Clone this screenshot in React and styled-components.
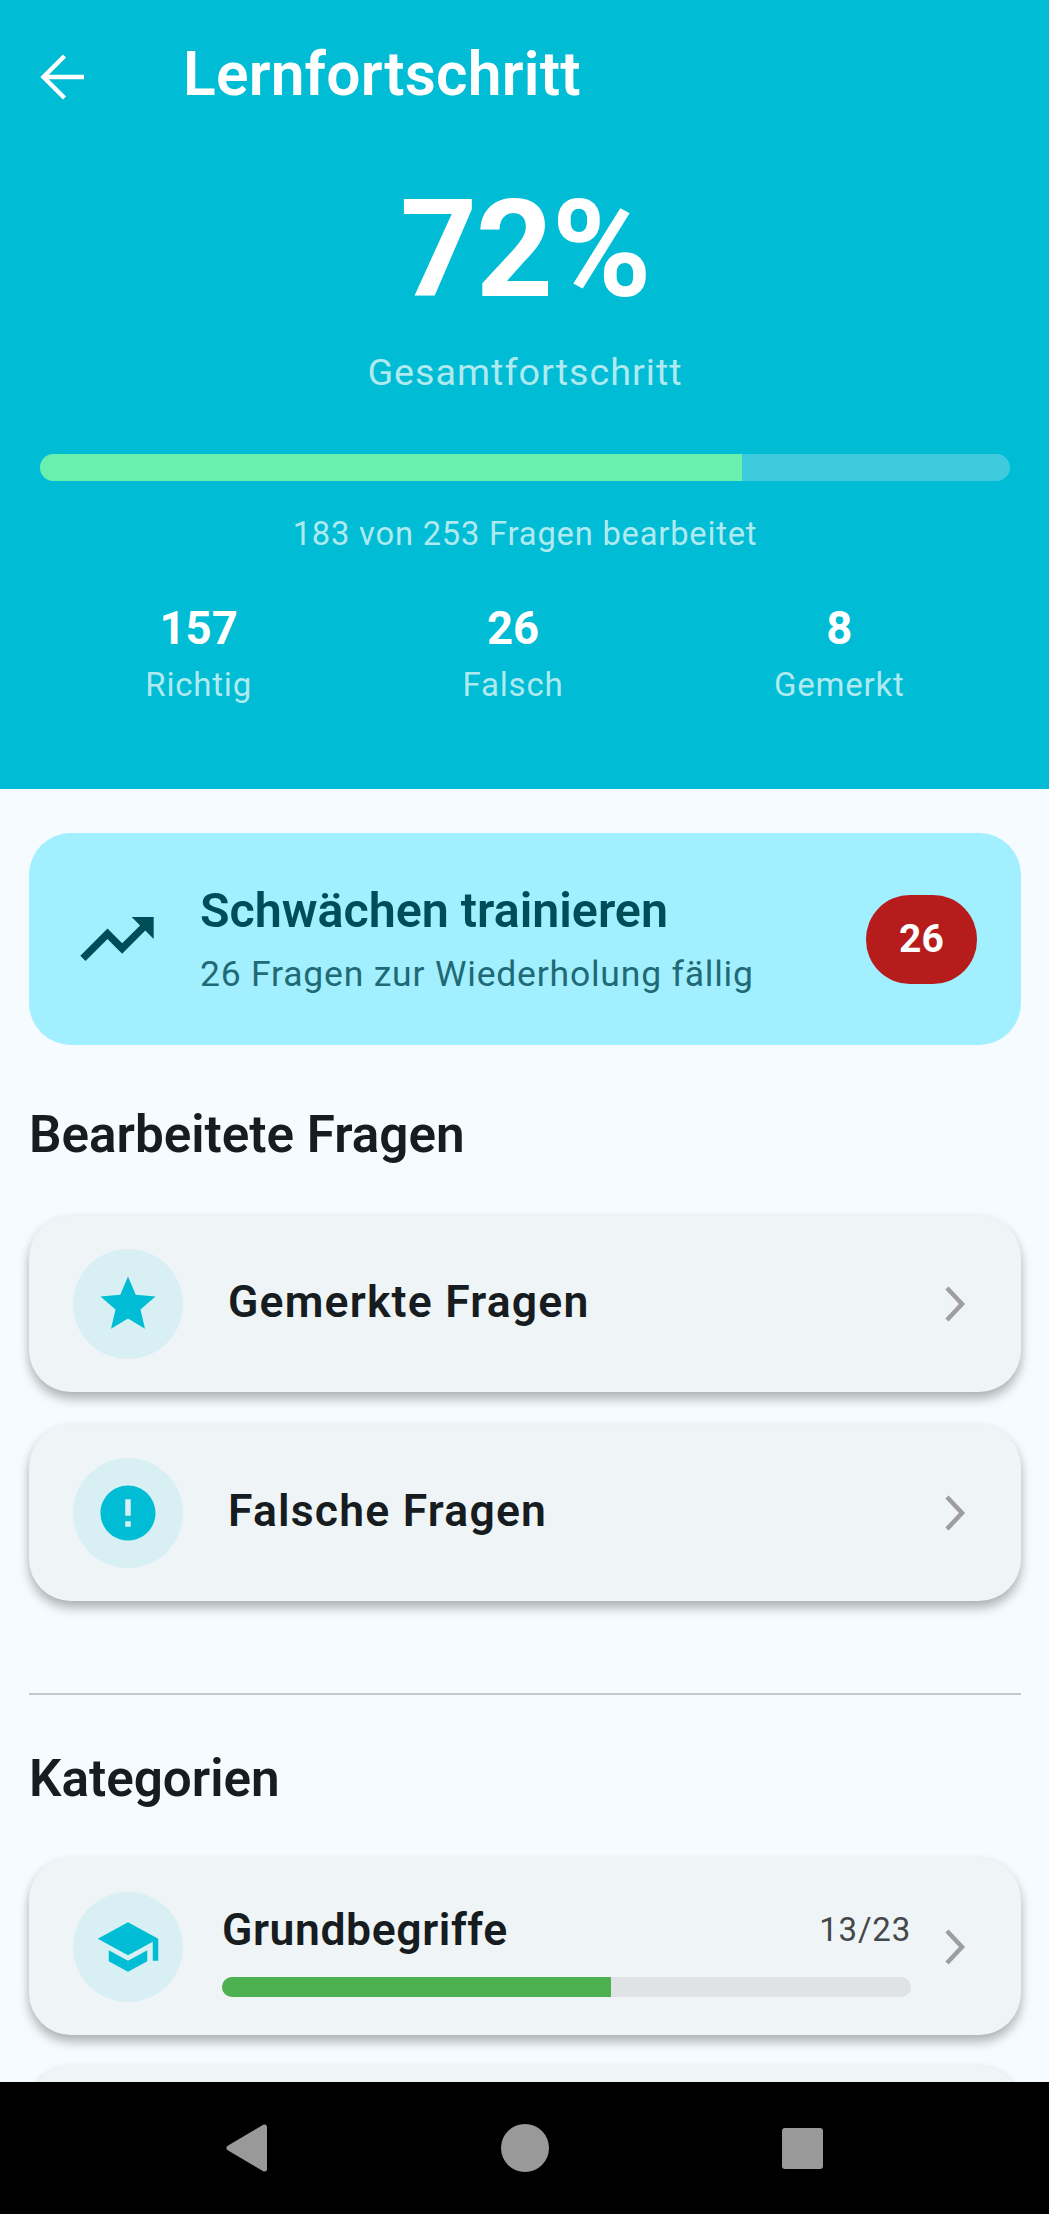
import React from "react";
import styled, { createGlobalStyle } from "styled-components";

const GlobalStyle = createGlobalStyle`
  html, body { margin: 0; padding: 0; }
  body { font-family: "Roboto", "Noto Sans", sans-serif; background: #f5fbfe; }
`;

const Screen = styled.div`
  width: 1049px;
  height: 2214px;
  display: flex;
  flex-direction: column;
  overflow: hidden;
  background: #f5fbfe;
`;

const Scroll = styled.main`
  flex: 1;
  min-height: 0;
  overflow: hidden;
`;

const Header = styled.header`
  height: 789px;
  box-sizing: border-box;
  padding: 0 39px 0 40px;
  background: #00bcd4;
  color: #fff;
  display: flex;
  flex-direction: column;
`;

const TopBar = styled.div`
  height: 150px;
  display: flex;
  align-items: center;
  gap: 98px;
`;

const BackIcon = styled.svg`
  width: 64px;
  height: 64px;
  margin-left: -11px;
  margin-right: -8px;
  flex: none;
  position: relative;
  top: 2px;
  fill: none;
  stroke: #fff;
  stroke-width: 4.5;
`;

const Title = styled.h1`
  margin: 0;
  font-size: 60.5px;
  line-height: 68px;
  font-weight: 600;
  letter-spacing: 0.2px;
`;

const Percent = styled.div`
  margin-top: 20px;
  text-align: center;
  font-size: 135px;
  line-height: 160px;
  font-weight: 700;
  letter-spacing: -1.5px;
`;

const Overall = styled.div`
  margin-top: 17px;
  text-align: center;
  font-size: 37.7px;
  line-height: 50px;
  letter-spacing: 1px;
  color: rgba(255, 255, 255, 0.7);
`;

const Track = styled.div`
  overflow: hidden;
  height: ${(p) => p.$height}px;
  border-radius: ${(p) => p.$height / 2}px;
  background: ${(p) => p.$track};
`;

const Fill = styled.div`
  height: 100%;
  background: ${(p) => p.$color};
`;

const MainTrack = styled(Track)`
  margin-top: 57px;
`;

const Answered = styled.div`
  margin-top: 32px;
  text-align: center;
  font-size: 32.7px;
  line-height: 42px;
  letter-spacing: 0.8px;
  color: rgba(255, 255, 255, 0.7);
`;

const Stats = styled.div`
  margin-top: 49px;
  display: flex;
  justify-content: space-around;
`;

const Stat = styled.div`
  text-align: center;
`;

const StatValue = styled.div`
  font-size: 45.5px;
  line-height: 50px;
  font-weight: 700;
`;

const StatLabel = styled.div`
  margin-top: 10px;
  font-size: 33px;
  line-height: 42px;
  letter-spacing: 0.8px;
  color: rgba(255, 255, 255, 0.7);
`;

const Body = styled.div`
  padding: 44px 28px 0 29px;
`;

const Banner = styled.section`
  height: 212px;
  box-sizing: border-box;
  padding: 0 44px;
  border-radius: 42px;
  background: #a2efff;
  display: flex;
  align-items: center;
`;

const BannerIcon = styled.svg`
  width: 88px;
  height: 88px;
  margin-right: 39px;
  flex: none;
  fill: #004d5a;
`;

const BannerText = styled.div`
  flex: 1;
`;

const BannerTitle = styled.div`
  font-size: 48.4px;
  line-height: 56px;
  font-weight: 600;
  color: #004d5a;
`;

const BannerSub = styled.div`
  margin-top: 14px;
  font-size: 35.5px;
  line-height: 42px;
  letter-spacing: 0.8px;
  color: #1f6a75;
`;

const Badge = styled.div`
  width: 111px;
  height: 89px;
  border-radius: 44px;
  background: #b71c1c;
  color: #fff;
  font-size: 39px;
  font-weight: 700;
  display: flex;
  align-items: center;
  justify-content: center;
`;

const SectionTitle = styled.h2`
  margin: 58px 0 49px;
  font-size: 51.2px;
  line-height: 64px;
  font-weight: 600;
  color: #161c20;
`;

const CategoriesTitle = styled(SectionTitle)`
  margin: 52px 0 47px;
`;

const CardList = styled.div`
  display: flex;
  flex-direction: column;
  gap: ${(p) => p.$gap}px;
`;

const Card = styled.div`
  height: ${(p) => p.$height}px;
  box-sizing: border-box;
  padding: 0 32px 0 44px;
  border-radius: 42px;
  background: #eff4f7;
  box-shadow: 0 7px 11px rgba(0, 0, 0, 0.28), 0 0 9px rgba(0, 0, 0, 0.04);
  display: flex;
  align-items: center;
`;

const IconCircle = styled.div`
  width: 110px;
  height: 110px;
  border-radius: 50%;
  background: #d8f0f4;
  display: flex;
  align-items: center;
  justify-content: center;
  flex: none;
`;

const CircleGlyph = styled.svg`
  width: 66px;
  height: 66px;
  fill: #00bcd4;
`;

const CardLabel = styled.div`
  flex: 1;
  margin-left: 45px;
  padding-bottom: 5px;
  font-size: 44.5px;
  line-height: 52px;
  font-weight: 600;
  letter-spacing: 1.2px;
  color: #161c20;
`;

const Chevron = styled.svg`
  width: 70px;
  height: 70px;
  flex: none;
  fill: none;
  stroke: #9e9e9e;
  stroke-width: 4.5;
`;

const CategoryInfo = styled.div`
  flex: 1;
  margin: 0 8px 0 39px;
  padding-top: 7px;
`;

const CategoryHead = styled.div`
  display: flex;
  align-items: center;
  justify-content: space-between;
`;

const CategoryName = styled.div`
  font-size: 44.5px;
  line-height: 52px;
  font-weight: 600;
  letter-spacing: 0.6px;
  color: #161c20;
`;

const CategoryCount = styled.div`
  font-size: 33px;
  letter-spacing: 0.8px;
  color: #44484a;
`;

const CategoryTrack = styled(Track)`
  margin-top: 21px;
`;

const Divider = styled.hr`
  margin: 92px 0 0;
  border: 0;
  height: 2px;
  background: #bfcbcd;
`;

const NavBar = styled.nav`
  height: 132px;
  flex: none;
  background: #000;
  display: flex;
  align-items: center;
  justify-content: center;
  gap: 230px;
`;

const NavIcon = styled.svg`
  width: 48px;
  height: 48px;
  fill: #999;
  stroke: #999;
`;

const Icon = ({ as: Comp, d, ...rest }) => (
  <Comp viewBox="0 0 24 24" {...rest}>
    <path d={d} />
  </Comp>
);

const ChevronIcon = () => (
  <Chevron viewBox="0 0 70 70">
    <polyline points="28,19 43,35 28,51" />
  </Chevron>
);

const paths = {
  trending: "M16 6l2.29 2.29-4.88 4.88-4-4L2 16.59 3.41 18l6-6 4 4 6.3-6.29L22 12V6z",
  star: "M12 17.27L18.18 21l-1.64-7.03L22 9.24l-7.19-.61L12 2 9.19 8.63 2 9.24l5.46 4.73L5.82 21z",
  error: "M12 2C6.48 2 2 6.48 2 12s4.48 10 10 10 10-4.48 10-10S17.52 2 12 2zm1 15h-2v-2h2v2zm0-4h-2V7h2v6z",
  school: "M5 13.18v4L12 21l7-3.82v-4L12 17l-7-3.82zM12 3L1 9l11 6 9-4.91V17h2V9L12 3z",
};

const stats = [
  { value: 157, label: "Richtig" },
  { value: 26, label: "Falsch" },
  { value: 8, label: "Gemerkt" },
];

const reviewLinks = [
  { icon: paths.star, label: "Gemerkte Fragen" },
  { icon: paths.error, label: "Falsche Fragen" },
];

export default function App() {
  return (
    <>
      <GlobalStyle />
      <Screen>
        <Scroll>
          <Header>
            <TopBar>
              <BackIcon viewBox="0 0 64 64">
                <path d="M35.5 11 L14.5 32 L35.5 53 M14.5 32 H55" />
              </BackIcon>
              <Title>Lernfortschritt</Title>
            </TopBar>
            <Percent>72%</Percent>
            <Overall>Gesamtfortschritt</Overall>
            <MainTrack $height={27} $track="#3dcbdd">
              <Fill $color="#69f0ae" style={{ width: `${(183 / 253) * 100}%` }} />
            </MainTrack>
            <Answered>183 von 253 Fragen bearbeitet</Answered>
            <Stats>
              {stats.map((s) => (
                <Stat key={s.label}>
                  <StatValue>{s.value}</StatValue>
                  <StatLabel>{s.label}</StatLabel>
                </Stat>
              ))}
            </Stats>
          </Header>

          <Body>
            <Banner>
              <Icon as={BannerIcon} d={paths.trending} />
              <BannerText>
                <BannerTitle>Schwächen trainieren</BannerTitle>
                <BannerSub>26 Fragen zur Wiederholung fällig</BannerSub>
              </BannerText>
              <Badge>26</Badge>
            </Banner>

            <SectionTitle>Bearbeitete Fragen</SectionTitle>
            <CardList $gap={33}>
              {reviewLinks.map((l) => (
                <Card key={l.label} $height={176}>
                  <IconCircle>
                    <Icon as={CircleGlyph} d={l.icon} />
                  </IconCircle>
                  <CardLabel>{l.label}</CardLabel>
                  <ChevronIcon />
                </Card>
              ))}
            </CardList>

            <Divider />

            <CategoriesTitle>Kategorien</CategoriesTitle>
            <CardList $gap={31}>
              <Card $height={177}>
                <IconCircle>
                  <Icon as={CircleGlyph} d={paths.school} />
                </IconCircle>
                <CategoryInfo>
                  <CategoryHead>
                    <CategoryName>Grundbegriffe</CategoryName>
                    <CategoryCount>13/23</CategoryCount>
                  </CategoryHead>
                  <CategoryTrack $height={20} $track="#dfe3e5">
                    <Fill $color="#4caf50" style={{ width: `${(13 / 23) * 100}%` }} />
                  </CategoryTrack>
                </CategoryInfo>
                <ChevronIcon />
              </Card>
              <Card $height={177} />
            </CardList>
          </Body>
        </Scroll>

        <NavBar>
          <NavIcon viewBox="0 0 48 48" strokeWidth="5" strokeLinejoin="round">
            <polygon points="6,24 41.5,3 41.5,45" />
          </NavIcon>
          <NavIcon viewBox="0 0 48 48" strokeWidth="0">
            <circle cx="24" cy="24" r="24" />
          </NavIcon>
          <NavIcon viewBox="0 0 48 48" strokeWidth="0">
            <rect x="3" y="4" width="41" height="41" rx="3" />
          </NavIcon>
        </NavBar>
      </Screen>
    </>
  );
}
